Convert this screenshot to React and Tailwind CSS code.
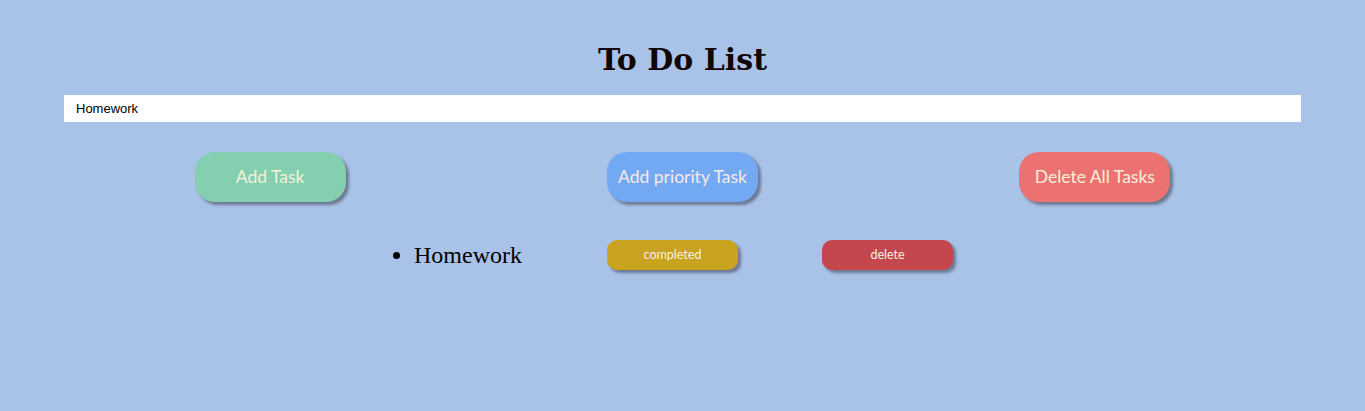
import React, { useState } from "react";

const App = () => {
	const [tasks] = useState(["Homework"]);

	return (
		<div className="min-h-[411px] w-full bg-[#a9c3e8] pt-[40px]">
			<h1 className="text-center text-[30px] leading-[40px] font-bold text-[#120505] font-['DejaVu_Serif',serif]">
				To Do List
			</h1>
			<div className="mx-[64px] mt-[15px]">
				<input
					type="text"
					defaultValue="Homework"
					className="block w-full h-[27px] bg-white px-[12px] text-[13px] text-black font-['Liberation_Sans',Arial,sans-serif] outline-none"
				/>
				<div className="flex justify-around mt-[30px]">
					<button className="w-[151px] h-[50px] rounded-[20px] bg-[#83cfaf] text-[17.5px] text-[#f8f0d8] font-['Lato',sans-serif] shadow-[3px_3px_3px_rgba(70,70,90,0.6)]">
						Add Task
					</button>
					<button className="w-[151px] h-[50px] rounded-[20px] bg-[#73a8f2] text-[17.5px] text-[#f8eae8] font-['Lato',sans-serif] shadow-[3px_3px_3px_rgba(70,70,90,0.6)]">
						Add priority Task
					</button>
					<button className="w-[151px] h-[50px] rounded-[20px] bg-[#ec7272] text-[17.5px] text-[#f8f0d8] font-['Lato',sans-serif] shadow-[3px_3px_3px_rgba(70,70,90,0.6)]">
						Delete All Tasks
					</button>
				</div>
			</div>
			<ul className="mt-[35px] pl-[414px] list-disc">
				{tasks.map((task) => (
					<li key={task} className="font-['Liberation_Serif',serif] text-[24px] text-black">
						<div className="flex items-center">
							<span className="w-[193px]">{task}</span>
							<button className="w-[131px] h-[30px] rounded-[10px] bg-[#c9a21f] text-[12.5px] text-[#f8f0e8] font-['Lato',sans-serif] shadow-[3px_3px_3px_rgba(70,70,90,0.6)]">
								completed
							</button>
							<button className="ml-[84px] w-[131px] h-[30px] rounded-[10px] bg-[#c3474d] text-[12.5px] text-[#f8f0e8] font-['Lato',sans-serif] shadow-[3px_3px_3px_rgba(70,70,90,0.6)]">
								delete
							</button>
						</div>
					</li>
				))}
			</ul>
		</div>
	);
};

export default App;
